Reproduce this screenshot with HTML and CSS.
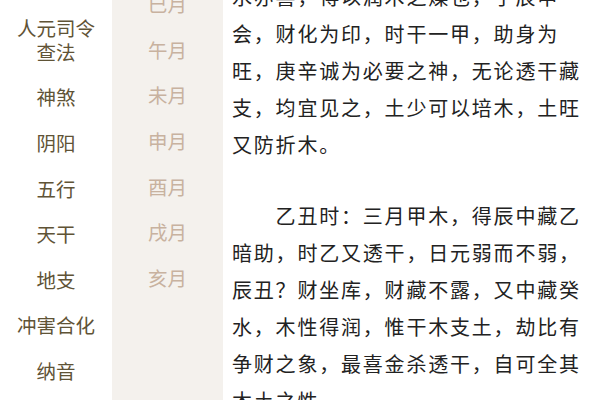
FILE: index.html
```html
<!DOCTYPE html>
<html lang="zh-CN">
<head>
<meta charset="utf-8">
<title>八字</title>
<link rel="stylesheet" href="styles.css">
</head>
<body>
<div class="page">
  <nav class="cats">
    <div class="cat">人元司令<br>查法</div>
    <div class="cat">神煞</div>
    <div class="cat">阴阳</div>
    <div class="cat">五行</div>
    <div class="cat">天干</div>
    <div class="cat">地支</div>
    <div class="cat">冲害合化</div>
    <div class="cat">纳音</div>
  </nav>
  <div class="months-col">
    <ul class="months">
      <li>巳月</li>
      <li>午月</li>
      <li>未月</li>
      <li>申月</li>
      <li>酉月</li>
      <li>戌月</li>
      <li>亥月</li>
    </ul>
  </div>
  <article class="content">
    <p class="cont">水亦喜，得以润木之燥也，于辰申会，财化为印，时干一甲，助身为旺，庚辛诚为必要之神，无论透干藏支，均宜见之，土少可以培木，土旺又防折木。</p>
    <p class="para">乙丑时：三月甲木，得辰中藏乙暗助，时乙又透干，日元弱而不弱，辰丑？财坐库，财藏不露，又中藏癸水，木性得润，惟干木支土，劫比有争财之象，最喜金杀透干，自可全其木土之性。</p>
  </article>
</div>
</body>
</html>
```

FILE: styles.css
```css
html, body {
  margin: 0;
  padding: 0;
  background: #ffffff;
}
body {
  width: 600px;
  height: 400px;
  overflow: hidden;
  font-family: "Noto Sans CJK SC", "Noto Sans", sans-serif;
}
.page {
  display: flex;
  height: 400px;
}
.cats {
  width: 112px;
  flex: none;
  padding-top: 5px;
  display: flex;
  flex-direction: column;
}
.cat {
  text-align: center;
  font-size: 19.5px;
  line-height: 24px;
  padding: 10.8px 0;
  color: #5f5336;
}
.months-col {
  width: 111px;
  flex: none;
  background: #f4f1ed;
  overflow: hidden;
}
.months {
  list-style: none;
  margin: -18.5px 0 0 0;
  padding: 0;
}
.months li {
  text-align: center;
  font-size: 19.5px;
  line-height: 24px;
  padding: 10.8px 0;
  color: #c8b29f;
}
.content {
  width: 356px;
  flex: none;
  padding-left: 9px;
  color: #222222;
  font-size: 20px;
  letter-spacing: 1.8px;
  line-height: 37px;
}
.content p {
  margin: 0;
}
.cont {
  margin-top: -22.5px !important;
}
.para {
  margin-top: 34px !important;
  text-indent: 43.6px;
}
```
